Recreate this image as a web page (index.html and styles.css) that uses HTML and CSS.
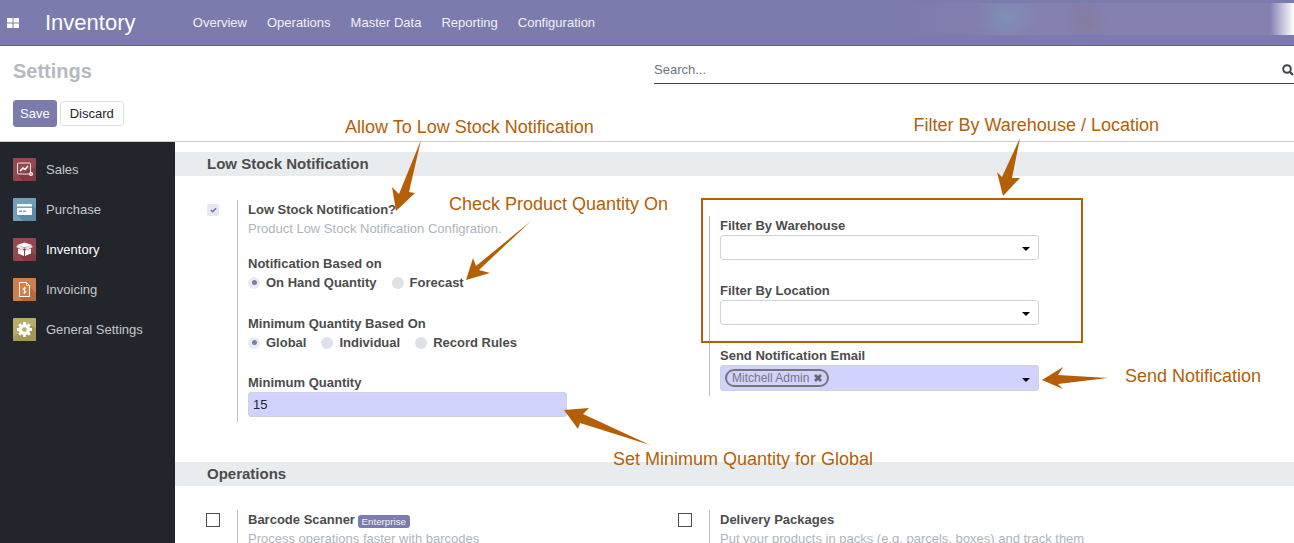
FILE: index.html
```html
<!DOCTYPE html>
<html lang="en">
<head>
<meta charset="utf-8">
<title>Inventory Settings</title>
<link rel="stylesheet" href="styles.css">
</head>
<body>
<header class="navbar">
  <svg class="apps" width="12" height="10" viewBox="0 0 12 10"><rect width="5.5" height="4.5" fill="#fff"/><rect x="6.5" width="5.5" height="4.5" fill="#fff"/><rect y="5.5" width="5.5" height="4.5" fill="#fff"/><rect x="6.5" y="5.5" width="5.5" height="4.5" fill="#fff"/></svg>
  <span class="brand">Inventory</span>
  <nav class="menu"><a>Overview</a><a>Operations</a><a>Master Data</a><a>Reporting</a><a>Configuration</a></nav>
  <div class="blurred"></div>
</header>
<section class="control">
  <div class="control-top">
    <h1 class="title">Settings</h1>
    <div class="search">
      <span class="search-text">Search...</span>
      <svg width="12" height="12" viewBox="0 0 12 12"><circle cx="5" cy="5" r="3.8" fill="none" stroke="#3f4450" stroke-width="2"/><path d="M7.8 7.8 11 11" stroke="#3f4450" stroke-width="2.2"/></svg>
    </div>
  </div>
  <div class="buttons"><button class="btn primary">Save</button><button class="btn">Discard</button></div>
</section>
<div class="main">
  <aside class="sidebar">
    <div class="app">
      <svg class="app-icon" viewBox="0 0 23 23"><rect width="23" height="23" rx="1" fill="#91494f"/><path d="M5 17 23 9v14H10z" fill="#7d3d43"/><rect x="4.5" y="5" width="13" height="11" rx="1" fill="none" stroke="#f3e6e6" stroke-width="1"/><path d="m7 13 3-3 2 1.500 3-3.500" fill="none" stroke="#fff" stroke-width="1.600"/><circle cx="18" cy="16" r="2" fill="#fff"/><circle cx="18" cy="16" r=".8" fill="#91494f"/></svg>
      <span class="app-name">Sales</span>
    </div>
    <div class="app">
      <svg class="app-icon" viewBox="0 0 23 23"><rect width="23" height="23" rx="1" fill="#70a0bd"/><path d="M4 17H19V7L23 11V23H10z" fill="#5d8aa6"/><rect x="4" y="6" width="15" height="11" rx="1" fill="#fff"/><rect x="4" y="8.500" width="15" height="1.500" fill="#70a0bd"/><rect x="6" y="12.500" width="3" height="1.500" fill="#70a0bd"/><rect x="10" y="12.500" width="3" height="1.500" fill="#70a0bd"/></svg>
      <span class="app-name">Purchase</span>
    </div>
    <div class="app active">
      <svg class="app-icon" viewBox="0 0 23 23"><rect width="23" height="23" rx="1" fill="#91494f"/><path d="M5 15 11 18l8-4 4 3v6H11z" fill="#7d3d43"/><path d="m4 7 7.500-2.500L19 7l-7.500 2.500z" fill="#fff"/><path d="M5 10.500 11 12.500V18L5 15.500zM18 10.500 12 12.500V18l6-2.500z" fill="#fff"/><path d="M3 9 5 7l6.500 3-2 2zM20 9l-2-2-6.500 3 2 2z" fill="#f0dcdc"/></svg>
      <span class="app-name">Inventory</span>
    </div>
    <div class="app">
      <svg class="app-icon" viewBox="0 0 23 23"><rect width="23" height="23" rx="1" fill="#cf7f4c"/><path d="M6 19H17V9L23 15V23H10z" fill="#b56b3c"/><path d="M6.500 4.500h7l3 3v11h-10z" fill="none" stroke="#fff" stroke-width="1"/><path d="M13.500 4.500v3h3" fill="none" stroke="#fff" stroke-width=".8"/><path d="M13 10.500c-.5-.8-3-1-3 .6 0 1.700 3 1 3 2.700 0 1.500-2.600 1.400-3.200.5M11.500 8.800v7" fill="none" stroke="#fff" stroke-width=".9"/></svg>
      <span class="app-name">Invoicing</span>
    </div>
    <div class="app">
      <svg class="app-icon" viewBox="0 0 23 23"><rect width="23" height="23" rx="1" fill="#b8ad68"/><path d="M0 23V19L6 15 16 6 23 10V23z" fill="#9c9256" opacity=".75"/><circle cx="11.500" cy="11.500" r="5.500" fill="#fff"/><g stroke="#fff" stroke-width="2.800"><path d="M11.500 4v15M4 11.500h15M6.200 6.200l10.600 10.600M16.800 6.200 6.200 16.800"/></g><circle cx="11.500" cy="11.500" r="2.300" fill="#b8ad68"/></svg>
      <span class="app-name">General Settings</span>
    </div>
  </aside>
  <main class="content">
    <h2 class="section">Low Stock Notification</h2>
    <div class="row first">
      <div class="setting">
        <div class="check-col"><span class="check on"><svg width="7" height="6" viewBox="0 0 8 7"><path d="m1 3.500 2 2L7 1.500" fill="none" stroke="#6e6da3" stroke-width="1.800"/></svg></span></div>
        <div class="body tall">
          <label class="lbl">Low Stock Notification?</label>
          <p class="muted">Product Low Stock Notification Configration.</p>
          <label class="lbl gap-a">Notification Based on</label>
          <div class="radios">
            <span class="radio on"></span><span class="opt">On Hand Quantity</span>
            <span class="radio"></span><span class="opt">Forecast</span>
          </div>
          <label class="lbl gap-b">Minimum Quantity Based On</label>
          <div class="radios">
            <span class="radio on"></span><span class="opt">Global</span>
            <span class="radio"></span><span class="opt">Individual</span>
            <span class="radio"></span><span class="opt">Record Rules</span>
          </div>
          <label class="lbl gap-c">Minimum Quantity</label>
          <div class="field filled">15</div>
        </div>
      </div>
      <div class="setting offset">
        <div class="check-col"></div>
        <div class="body end-pad">
          <label class="lbl">Filter By Warehouse</label>
          <div class="field select"><i class="caret"></i></div>
          <label class="lbl gap-c">Filter By Location</label>
          <div class="field select"><i class="caret"></i></div>
          <label class="lbl gap-c">Send Notification Email</label>
          <div class="field select filled tall-field">
            <span class="tag">Mitchell Admin<svg width="10" height="10" viewBox="0 0 10 10"><path d="m2 2 6 6m0-6-6 6" stroke="#666" stroke-width="2.800"/></svg></span>
            <i class="caret"></i>
          </div>
        </div>
      </div>
    </div>
    <h2 class="section">Operations</h2>
    <div class="row">
      <div class="setting">
        <div class="check-col"><span class="check box"></span></div>
        <div class="body">
          <label class="lbl">Barcode Scanner <span class="badge">Enterprise</span></label>
          <p class="muted">Process operations faster with barcodes</p>
        </div>
      </div>
      <div class="setting">
        <div class="check-col"><span class="check box"></span></div>
        <div class="body">
          <label class="lbl">Delivery Packages</label>
          <p class="muted">Put your products in packs (e.g. parcels, boxes) and track them</p>
        </div>
      </div>
    </div>
  </main>
</div>
<div class="notes">
  <svg class="arrows" width="1294" height="543" viewBox="0 0 1294 543">
    <rect x="702" y="199" width="380" height="143" fill="none" stroke="#b45f06" stroke-width="2"/>
    <g fill="#b45f06">
      <polygon points="421,140 409,192 415,193 396,211 392,187 399,194"/>
      <polygon points="531,221 479,270 490,273 466,280 473,258 476,266"/>
      <polygon points="650,445 583,414 589,408 564,410 578,429 580,423"/>
      <polygon points="1020,138 1012,178 1020,178 1003,196 997,172 1002,177"/>
      <polygon points="1108,378 1058,375 1063,367 1042,380 1063,389 1058,384"/>
    </g>
  </svg>
  <span class="note n1">Allow To Low Stock Notification</span>
  <span class="note n2">Filter By Warehouse / Location</span>
  <span class="note n3">Check Product Quantity On</span>
  <span class="note n4">Send Notification</span>
  <span class="note n5">Set Minimum Quantity for Global</span>
</div>
</body>
</html>
```
FILE: styles.css
```css
* { box-sizing: border-box; }
html, body { margin: 0; height: 543px; overflow: hidden; }
body {
  position: relative;
  display: flex;
  flex-direction: column;
  font-family: "Liberation Sans", Arial, sans-serif;
  font-size: 13px;
  line-height: 19px;
  color: #4c4c4c;
  background: #fff;
}
.navbar {
  flex: 0 0 46px;
  display: flex;
  align-items: center;
  background: #7c7bad;
  border-bottom: 1px solid #5f5e97;
  color: #fff;
  padding-left: 7px;
}
.brand { margin-left: 26px; font-size: 22px; line-height: 30px; width: 138px; }
.menu { display: flex; gap: 20px; margin-left: 9.8px; color: #f0f0f6; margin-top: -1px; }
.blurred {
  align-self: flex-start;
  margin: 3px 0 0 auto;
  width: 400px;
  height: 32px;
  background:
    linear-gradient(90deg, transparent 94%, #fff 100%),
    radial-gradient(ellipse 32px 26px at 113px 14px, #7f90b3, transparent),
    radial-gradient(ellipse 22px 26px at 192px 16px, #857b9e, transparent),
    linear-gradient(90deg, #7c7bad, #8480b0 30%, #8480b0);
}
.control { flex: 0 0 96px; border-bottom: 1px solid #ccc; padding: 0 0 0 13px; }
.control-top { display: flex; justify-content: space-between; height: 54px; }
.title { margin: 11px 0 0; font-size: 20px; line-height: 28px; font-weight: 700; color: #b3bac2; }
.search {
  width: 640px;
  height: 27px;
  margin-top: 11px;
  display: flex;
  justify-content: space-between;
  align-items: center;
  border-bottom: 1px solid #444;
  color: #6c757d;
  font-size: 13px;
}
.search-text { padding-bottom: 2px; }
.buttons { display: flex; align-items: center; gap: 3px; }
.btn {
  font: inherit;
  height: 25px;
  padding: 0 9px;
  border: 1px solid #dee2e6;
  border-radius: 3px;
  background: #fff;
  color: #212529;
}
.primary { height: 27px; padding: 0 6px; background: #7c7bad; border-color: #7c7bad; color: #fff; }
.main { flex: 1; display: flex; min-height: 0; }
.sidebar { flex: 0 0 175px; background: #22262c; padding-top: 8px; color: #c5c8cc; }
.app { height: 40px; display: flex; align-items: center; padding-left: 13px; gap: 10px; }
.app.active { color: #fff; }
.app-icon { width: 23px; height: 23px; margin-top: -1px; }
.app-name { padding-bottom: 2px; }
.content { flex: 1; padding-top: 10px; min-width: 0; }
.section {
  margin: 0;
  height: 24px;
  padding-left: 32px;
  background: #e9ecef;
  font-size: 15px;
  line-height: 24px;
  font-weight: 700;
}
.row { display: flex; padding: 24px 0 0 31px; }
.row.first { padding-bottom: 40px; }
.setting { flex: 0 0 472px; display: flex; align-items: flex-start; }
.offset { padding-top: 16px; }
.check-col { flex: 0 0 31px; }
.check { display: block; }
.check.on {
  width: 12px;
  height: 12px;
  margin: 4px 0 0 1px;
  border-radius: 2px;
  background: #e6e8f0;
  display: flex;
  align-items: center;
  justify-content: center;
}
.check.box { width: 14px; height: 14px; margin-top: 3px; border: 1.5px solid #4c4c4c; }
.body { border-left: 1px solid #bbb; padding: 0 0 0 10px; }
.body.tall { height: 222px; }
.body.end-pad { padding-bottom: 5px; }
.lbl { display: block; font-weight: 700; }
.muted { margin: 0; color: #adb5bd; white-space: nowrap; }
.gap-a { margin-top: 16px; }
.gap-b { margin-top: 22px; }
.gap-c { margin-top: 21px; }
.radios { display: flex; align-items: center; font-weight: 700; }
.radio { width: 12px; height: 12px; border-radius: 50%; background: #dee2e6; display: flex; margin-right: 6px; }
.radio.on { background: #e9ecef; align-items: center; justify-content: center; }
.radio.on::after { content: ""; width: 5px; height: 5px; border-radius: 50%; background: #7c7bad; }
.opt { margin-right: 15px; }
.field {
  width: 319px;
  height: 25px;
  border: 1px solid #ced4da;
  border-radius: 3px;
  padding: 0 4px;
  line-height: 24px;
  color: #212529;
}
.filled { background: #d2d2ff; }
.select { display: flex; align-items: center; justify-content: space-between; padding: 0 8px 0 4px; }
.caret { margin-left: auto; margin-top: 3px; border: 4px solid transparent; border-top-color: #000; border-bottom: 0; }
.tall-field { height: 26px; }
.tag {
  display: flex;
  align-items: center;
  gap: 4px;
  height: 18px;
  padding: 0 4px 0 5px;
  border: 2px solid #777;
  border-radius: 9px;
  font-size: 12px;
  line-height: 14px;
  color: #777;
}
.badge {
  display: inline-block;
  margin-left: -1px;
  padding: 0 4px;
  height: 13px;
  border-radius: 3px;
  background: #7c7bad;
  color: #f3f3f8;
  font-size: 9.75px;
  font-weight: 400;
  line-height: 13px;
  vertical-align: -1px;
}
.notes { position: absolute; inset: 0; pointer-events: none; }
.arrows { position: absolute; left: 0; top: 0; }
.note { position: absolute; font-size: 18px; line-height: 22px; color: #b45f06; white-space: nowrap; }
.n1 { left: 345px; top: 116px; }
.n2 { left: 913.500px; top: 114px; }
.n3 { left: 449px; top: 193px; }
.n4 { left: 1125px; top: 365px; }
.n5 { left: 613px; top: 448px; }
```
